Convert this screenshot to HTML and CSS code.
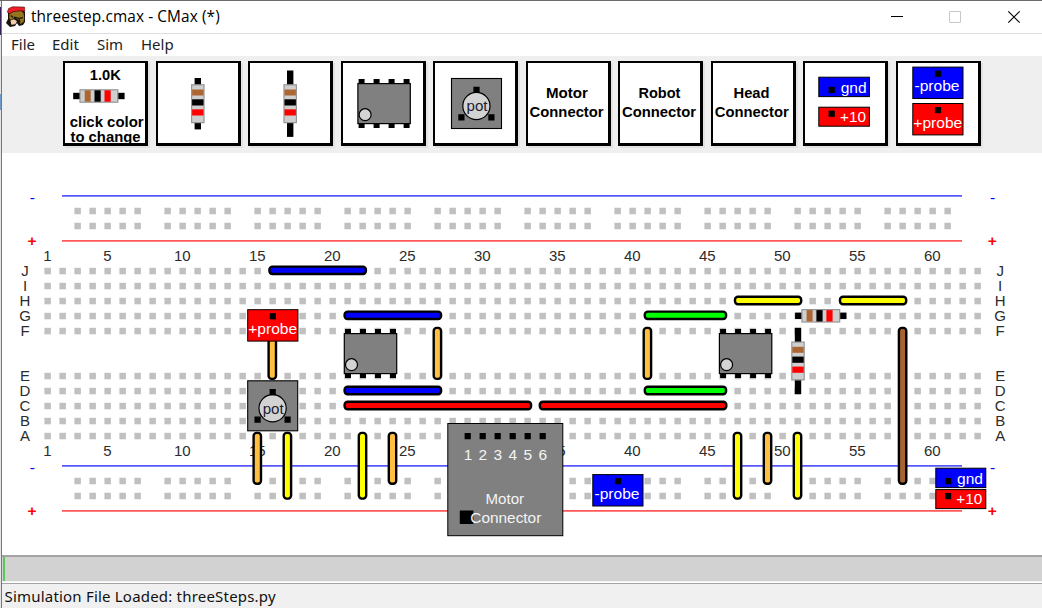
FILE: index.html
```
<!DOCTYPE html>
<html lang="en">
<head>
<meta charset="utf-8">
<title>threestep.cmax - CMax (*)</title>
<link rel="stylesheet" href="styles.css">
</head>
<body>
<svg class="defs" width="0" height="0" aria-hidden="true">
  <defs>
    <g id="resistor-body">
      <rect x="6.8" y="-6.2" width="37.8" height="12.4" fill="#cfcfcf" stroke="#969696" stroke-width="1.2"/>
      <rect x="11.5" y="-5.7" width="6" height="11.4" fill="#ac6633"/>
      <rect x="21.3" y="-5.7" width="6.2" height="11.4" fill="#000"/>
      <rect x="31.3" y="-5.7" width="6.2" height="11.4" fill="#f00"/>
    </g>
    <g id="resistor">
      <rect x="0" y="-3.2" width="51.4" height="6.4"/>
      <use href="#resistor-body"/>
    </g>
    <g id="resistor-long">
      <rect x="-7.5" y="-3.2" width="66.4" height="6.4"/>
      <use href="#resistor-body"/>
    </g>
    <g id="chip">
      <path d="M1.3-4h6v49h-6zM16.3-4h6v49h-6zM31.3-4h6v49h-6zM46.3-4h6v49h-6z"/>
      <rect x=".6" y=".6" width="52.4" height="40" fill="#808080" stroke="#000" stroke-width="1.2"/>
      <circle cx="7.8" cy="31.7" r="6" fill="#d3d3d3" stroke="#000" stroke-width="1.2"/>
    </g>
    <g id="pot">
      <rect x=".5" y=".5" width="50" height="50" fill="#808080" stroke="#000" stroke-width="1.1"/>
      <circle cx="25.4" cy="28" r="13.6" fill="#d3d3d3" stroke="#000" stroke-width="1.2"/>
      <path d="M22.4 8.8h6.2v6.2h-6.2zM7.3 36.3h6.2v6.2h-6.2zM37.3 36.3h6.2v6.2h-6.2z"/>
      <text class="mid" x="26" y="33.3" fill="#1c1c30" textLength="21" lengthAdjust="spacingAndGlyphs">pot</text>
    </g>
    <g id="probe-neg">
      <rect x=".5" y=".5" width="50.2" height="31.4" fill="#00f" stroke="#000"/>
      <rect x="22.6" y="4" width="6.2" height="6.2"/>
      <text x="2.2" y="24.8" fill="#fff" textLength="45" lengthAdjust="spacingAndGlyphs">-probe</text>
    </g>
    <g id="probe-pos">
      <rect x=".5" y=".5" width="50.2" height="31.4" fill="#f00" stroke="#000"/>
      <rect x="22.6" y="4" width="6.2" height="6.2"/>
      <text x="1" y="24.8" fill="#fff" textLength="49" lengthAdjust="spacingAndGlyphs">+probe</text>
    </g>
    <pattern id="holes" x="41" y="264" width="15" height="15" patternUnits="userSpaceOnUse">
      <rect x="3.4" y="3.8" width="6.5" height="6.5" fill="#c0c0c0"/>
    </pattern>
    <pattern id="rail-holes" x="71" y="204" width="90" height="15" patternUnits="userSpaceOnUse">
      <path d="M3.4 3.8h6.5v6.5h-6.5zM18.4 3.8h6.5v6.5h-6.5zM33.4 3.8h6.5v6.5h-6.5zM48.4 3.8h6.5v6.5h-6.5zM63.4 3.8h6.5v6.5h-6.5z" fill="#c0c0c0"/>
    </pattern>
  </defs>
</svg>
<div class="frame">
  <div class="edge"><i class="edge-dark"></i><i class="edge-blue"></i></div>
  <div class="window">
    <header class="titlebar">
      <svg class="logo" width="21" height="21" viewBox="0 0 21 21">
        <path d="M2 6L5 3l11-1 3 4v10l-2 3-4 1-2-3-2 3-5 1-4-4 2-4z" fill="#16120c"/>
        <path d="M3.5 8L8 5.500l7-.5 2.500 2 .8 5-.8 4-3.200 2-1.600-4-4-2.500-3.700 2.500-1.700-1.500z" fill="#97751d"/>
        <path d="M4.500 14.500l3.500-1.200 3 1.900-1.700 3.100-4 .4z" fill="#f5ceb0"/>
        <path d="M8 11.200l5 1.200 4-.8M13 13l1 3.500M5 9.500l2 2" fill="none" stroke="#1b1710" stroke-width="1.200"/>
        <path d="M1.300 6.200L2.600 2.500 6.500.8l12 .3.300 4.200-4.300-.6-7 .9-3.800 2z" fill="#ee1c24" stroke="#4a1010" stroke-width=".6"/>
      </svg>
      <h1 class="title">threestep.cmax - CMax (*)</h1>
      <svg class="controls" width="134" height="16" viewBox="890 9 134 16" fill="none">
        <path d="M891 16.5h12" stroke="#000"/>
        <path d="M949.5 11.5h11v11h-11z" stroke="#c8c8c8"/>
        <path d="M1008.3 11.3l11.4 11.4M1019.7 11.3l-11.4 11.4" stroke="#000" stroke-width="1.1"/>
      </svg>
    </header>
    <nav class="menu"><span class="m-file">File</span><span class="m-edit">Edit</span><span class="m-sim">Sim</span><span class="m-help">Help</span></nav>
    <div class="toolbar">
      <svg class="tile" viewBox="65 63 80 80">
        <text class="b mid" x="105.3" y="80.3" textLength="31" lengthAdjust="spacingAndGlyphs">1.0K</text>
        <use href="#resistor" x="73.2" y="96"/>
        <text class="b mid" x="106.7" y="126.6" textLength="74" lengthAdjust="spacingAndGlyphs">click color</text>
        <text class="b mid" x="105.5" y="141.6" textLength="70" lengthAdjust="spacingAndGlyphs">to change</text>
      </svg>
      <svg class="tile" viewBox="158 63 80 80"><use href="#resistor" transform="translate(197.8 78) rotate(90)"/></svg>
      <svg class="tile" viewBox="250 63 80 80"><use href="#resistor-long" transform="translate(290.2 78) rotate(90)"/></svg>
      <svg class="tile" viewBox="343 63 80 80"><use href="#chip" x="357.3" y="83"/></svg>
      <svg class="tile" viewBox="435 63 80 80"><use href="#pot" x="451" y="78"/></svg>
      <svg class="tile" viewBox="528 63 80 80"><text class="b mid" x="567" y="98" textLength="42" lengthAdjust="spacingAndGlyphs">Motor</text><text class="b mid" x="566.6" y="116.7" textLength="74" lengthAdjust="spacingAndGlyphs">Connector</text></svg>
      <svg class="tile" viewBox="620 63 80 80"><text class="b mid" x="659.4" y="98" textLength="42" lengthAdjust="spacingAndGlyphs">Robot</text><text class="b mid" x="659" y="116.7" textLength="74" lengthAdjust="spacingAndGlyphs">Connector</text></svg>
      <svg class="tile" viewBox="713 63 80 80"><text class="b mid" x="751.5" y="98" textLength="36" lengthAdjust="spacingAndGlyphs">Head</text><text class="b mid" x="751.7" y="116.7" textLength="74" lengthAdjust="spacingAndGlyphs">Connector</text></svg>
      <svg class="tile" viewBox="805 63 80 80">
        <rect x="818.8" y="77.2" width="50.6" height="19.4" fill="#00f" stroke="#000"/>
        <rect x="828.6" y="86.8" width="6.2" height="6.2"/>
        <text class="end" x="866.7" y="93.2" fill="#fff" textLength="26" lengthAdjust="spacingAndGlyphs">gnd</text>
        <rect x="818.8" y="107.2" width="50.6" height="19" fill="#f00" stroke="#000"/>
        <rect x="828.6" y="110.6" width="6.2" height="6.2"/>
        <text class="end" x="866" y="121.7" fill="#fff" textLength="26" lengthAdjust="spacingAndGlyphs">+10</text>
      </svg>
      <svg class="tile" viewBox="898 63 80 80"><use href="#probe-neg" x="912.3" y="66.6"/><use href="#probe-pos" x="912.3" y="103"/></svg>
    </div>
    <svg class="board" viewBox="2 153 1040 401">
      <g fill="url(#holes)">
        <rect x="41" y="264" width="945" height="75"/>
        <rect x="41" y="369" width="945" height="75"/>
      </g>
      <g fill="url(#rail-holes)">
        <rect x="71" y="204" width="900" height="30"/>
        <rect x="71" y="474" width="900" height="30"/>
      </g>
      <path d="M62 195.900h900M62 465.900h900" stroke="#5858ff" stroke-width="1.8"/>
      <path d="M62 240.900h900M62 510.900h900" stroke="#ff5858" stroke-width="1.8"/>
      <g class="mid" fill="#00f"><text x="32.3" y="203">-</text><text x="992.7" y="203">-</text><text x="32.3" y="472.8">-</text><text x="992.7" y="472.8">-</text></g>
      <g class="b mid" fill="#f00"><text x="32" y="246">+</text><text x="992.3" y="246">+</text><text x="32" y="515.8">+</text><text x="992.3" y="515.8">+</text></g>
      <g class="mid label">
        <text x="47.5" y="261.4">1</text><text x="107.5" y="261.4">5</text><text x="182.3" y="261.4">10</text><text x="257.3" y="261.4">15</text><text x="332.3" y="261.4">20</text><text x="407.3" y="261.4">25</text><text x="482.3" y="261.4">30</text><text x="557.3" y="261.4">35</text><text x="632.3" y="261.4">40</text><text x="707.3" y="261.4">45</text><text x="782.3" y="261.4">50</text><text x="857.3" y="261.4">55</text><text x="932.3" y="261.4">60</text>
        <text x="47.5" y="456.4">1</text><text x="107.5" y="456.4">5</text><text x="182.3" y="456.4">10</text><text x="257.3" y="456.4">15</text><text x="332.3" y="456.4">20</text><text x="407.3" y="456.4">25</text><text x="557.3" y="456.4">35</text><text x="632.3" y="456.4">40</text><text x="707.3" y="456.4">45</text><text x="782.3" y="456.4">50</text><text x="857.3" y="456.4">55</text><text x="932.3" y="456.4">60</text>
        <text x="25" y="276.3">J</text><text x="25" y="291.3">I</text><text x="25" y="306.3">H</text><text x="25" y="321.3">G</text><text x="25" y="336.3">F</text>
        <text x="25" y="381.3">E</text><text x="25" y="396.3">D</text><text x="25" y="411.3">C</text><text x="25" y="426.3">B</text><text x="25" y="441.3">A</text>
        <text x="1000.2" y="276.3">J</text><text x="1000.2" y="291.3">I</text><text x="1000.2" y="306.3">H</text><text x="1000.2" y="321.3">G</text><text x="1000.2" y="336.3">F</text>
        <text x="1000.2" y="381.3">E</text><text x="1000.2" y="396.3">D</text><text x="1000.2" y="411.3">C</text><text x="1000.2" y="426.3">B</text><text x="1000.2" y="441.3">A</text>
      </g>
      <g class="wires">
        <g fill="#00f">
          <rect x="269.4" y="266.6" width="96.5" height="7.4" rx="3"/>
          <rect x="344.6" y="311.6" width="96.5" height="7.4" rx="3"/>
          <rect x="344.6" y="386.8" width="96.5" height="7.4" rx="3"/>
        </g>
        <g fill="#f00">
          <rect x="344.6" y="401.8" width="186.5" height="7.4" rx="3"/>
          <rect x="539.8" y="401.8" width="186.5" height="7.4" rx="3"/>
        </g>
        <g fill="#0f0">
          <rect x="644.8" y="311.6" width="81.3" height="7.4" rx="3"/>
          <rect x="644.8" y="386.8" width="81.3" height="7.4" rx="3"/>
        </g>
        <g fill="#ff0">
          <rect x="735" y="296.8" width="66.2" height="7.4" rx="3"/>
          <rect x="840" y="296.8" width="66.2" height="7.4" rx="3"/>
          <rect x="283.7" y="432.9" width="7.4" height="65.7" rx="3"/>
          <rect x="358.8" y="432.9" width="7.4" height="65.7" rx="3"/>
          <rect x="733.8" y="432.9" width="7.4" height="65.7" rx="3"/>
          <rect x="793.8" y="432.9" width="7.4" height="65.7" rx="3"/>
        </g>
        <g fill="#ffbf40">
          <rect x="268.6" y="327.9" width="7.4" height="51" rx="3"/>
          <rect x="433.7" y="327.9" width="7.4" height="51" rx="3"/>
          <rect x="643.7" y="327.9" width="7.4" height="51" rx="3"/>
          <rect x="253.6" y="432.9" width="7.4" height="50.8" rx="3"/>
          <rect x="388.8" y="432.9" width="7.4" height="50.8" rx="3"/>
          <rect x="763.8" y="432.9" width="7.4" height="50.8" rx="3"/>
        </g>
        <rect x="898.9" y="327.9" width="7.4" height="155.8" rx="3" fill="#a66332"/>
      </g>
      <use href="#chip" x="343.7" y="333"/>
      <use href="#chip" x="718.8" y="333"/>
      <use href="#probe-pos" x="247.2" y="309.2"/>
      <use href="#pot" x="247.2" y="380.3"/>
      <use href="#resistor" x="795.1" y="315.8"/>
      <use href="#resistor-long" transform="translate(798 335.3) rotate(90)"/>
      <rect x="447.8" y="423.5" width="115" height="112.2" fill="#808080" stroke="#000"/>
      <path d="M464.6 433h6.2v6.2h-6.2zM479.6 433h6.2v6.2h-6.2zM494.6 433h6.2v6.2h-6.2zM509.6 433h6.2v6.2h-6.2zM524.6 433h6.2v6.2h-6.2zM539.6 433h6.2v6.2h-6.2zM459.8 510.5h13.6v13.5h-13.6z"/>
      <g class="mid" fill="#f4f4f4">
        <text x="468" y="460.3">1</text><text x="482.8" y="460.3">2</text><text x="497.8" y="460.3">3</text><text x="512.8" y="460.3">4</text><text x="527.8" y="460.3">5</text><text x="542.8" y="460.3">6</text>
        <text x="504.8" y="504.4" textLength="38.500" lengthAdjust="spacingAndGlyphs">Motor</text><text x="505.8" y="522.9" textLength="71" lengthAdjust="spacingAndGlyphs">Connector</text>
      </g>
      <use href="#probe-neg" x="592.3" y="474.1"/>
      <rect x="935.8" y="468.2" width="50" height="19.4" fill="#00f" stroke="#000"/>
      <rect x="945" y="478" width="6.2" height="6.2"/>
      <text class="end" x="983" y="483.8" fill="#fff" textLength="26" lengthAdjust="spacingAndGlyphs">gnd</text>
      <rect x="935.8" y="489.6" width="50" height="19" fill="#f00" stroke="#000"/>
      <rect x="945" y="493" width="6.2" height="6.2"/>
      <text class="end" x="982.2" y="503.8" fill="#fff" textLength="26" lengthAdjust="spacingAndGlyphs">+10</text>
    </svg>
    <div class="progress"><div class="progress-fill"></div></div>
    <footer class="status"><span class="status-text">Simulation File Loaded: threeSteps.py</span></footer>
  </div>
</div>
</body>
</html>
```
FILE: styles.css
```
* { box-sizing: border-box; }
body { margin: 0; width: 1042px; height: 608px; overflow: hidden; background: #fff; }
.defs { position: absolute; }
.frame { display: flex; height: 608px; border-top: 1px solid #6e6a6c; }
.edge { width: 2px; flex: none; background: #e4e4e4; border-right: 1px solid #777; padding-top: 6px; display: flex; flex-direction: column; }
.edge-dark { height: 28px; background: #35205a; }
.edge-blue { height: 16px; margin-top: 59px; background: #6e9bc8; }
.window { width: 1040px; display: flex; flex-direction: column; }
.titlebar { height: 33px; flex: none; display: flex; align-items: center; border-bottom: 1px solid #dedede; padding-left: 4px; }
.logo { flex: none; margin-top: -1px; }
.title { margin: 0 0 0 4px; font: 400 15.4px/20px "Open Sans", "Noto Sans", sans-serif; letter-spacing: .1px; color: #000; white-space: nowrap; }
.controls { margin-left: auto; margin-right: 18px; }
.menu { height: 22px; flex: none; display: flex; align-items: center; padding: 0 0 2px 9px; font: 15px/20px "Noto Sans", sans-serif; color: #222; }
.m-file { width: 41px; }
.m-edit { width: 45px; }
.m-sim { width: 44px; }
.toolbar { height: 97px; flex: none; display: flex; gap: 7.5px; background: #efefef; padding: 5px 0 0 61.4px; }
.tile { width: 85px; height: 85px; flex: none; background: #fff; border: solid #000; border-width: 2px 3px 3px 2px; box-shadow: 2px 2px 0 #e2e2e2; overflow: hidden; }
.board { display: block; width: 1040px; height: 401px; flex: none; background: #fff; }
text { font-family: "Liberation Sans", Arial, sans-serif; font-size: 15.5px; }
.b { font-weight: 700; }
.mid { text-anchor: middle; }
.end { text-anchor: end; }
.label { fill: #2c2c2c; }
.label text { font-size: 15px; }
.wires { stroke: #000; stroke-width: 2.4; }
.progress { height: 27px; flex: none; border-top: 2px solid #a3a3a3; border-bottom: 1px solid #f2f2f2; background: #d2d2d2; padding-left: 1px; margin-top: 1px; }
.progress-fill { width: 2px; height: 24px; background: #5bc85b; }
.status { flex: 1; margin-top: 1px; border-top: 1px solid #a3a3a3; background: #f0f0f0; padding: 0 0 1px 2.5px; display: flex; align-items: center; }
.status-text { font: 15px/20px "Noto Sans", sans-serif; letter-spacing: .2px; color: #111; white-space: nowrap; }
```
